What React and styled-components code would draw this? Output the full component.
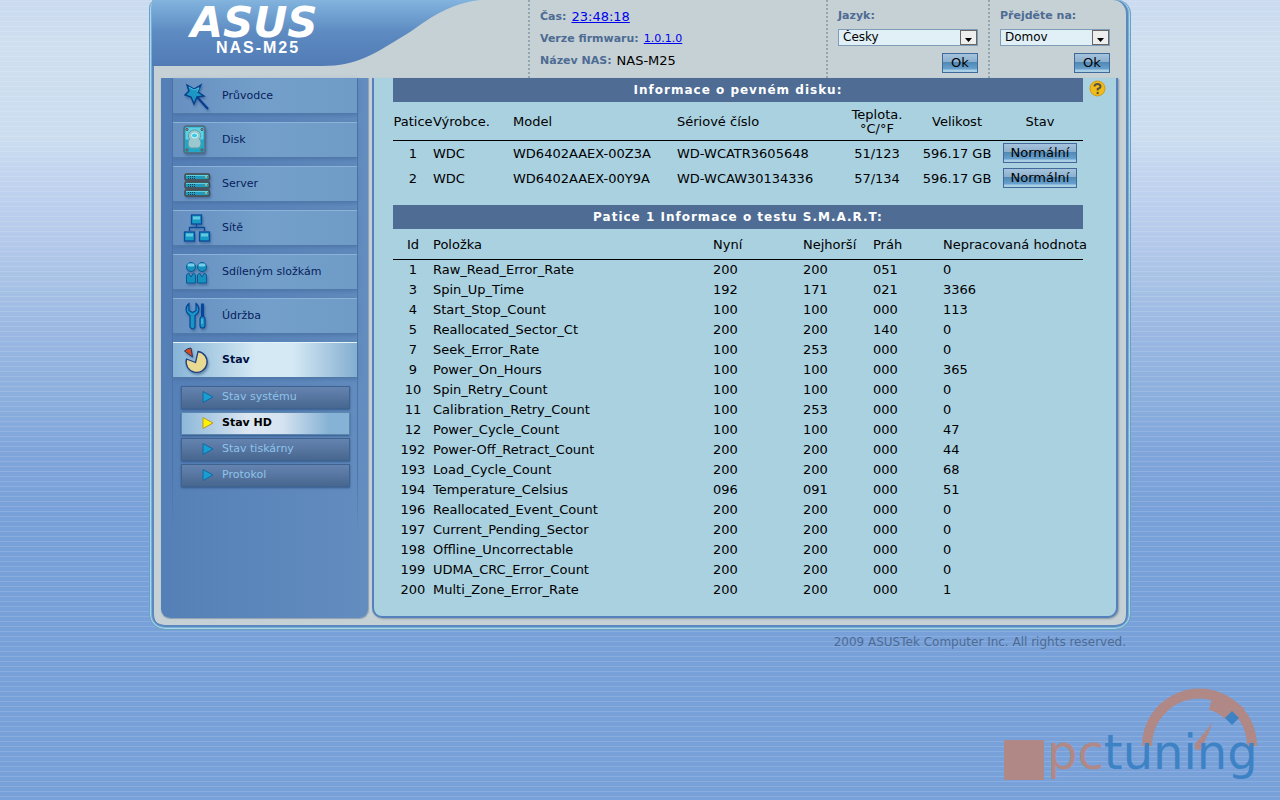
import React from 'react';
import styled, { createGlobalStyle, css } from 'styled-components';

const Global = createGlobalStyle`
  * { box-sizing: border-box; }
  html { background: #7ba3db; }
  body {
    margin: 0;
    min-height: 100vh;
    font: 13px/20px "DejaVu Sans", Verdana, sans-serif;
    color: #000;
    background:
      repeating-linear-gradient(to bottom, transparent 0 1px, rgba(255,255,255,.13) 1px 2px, transparent 2px 5px),
      linear-gradient(to bottom, #cadaf0 0, #cfdff0 40px, #cbddef 140px, #c3d5ef 170px, #b7cbec 230px, #a8c3e6 280px, #9bb8e3 330px, #8bafdd 400px, #80a5db 450px, #78a1d9 520px, #78a1d9 100%);
  }
`;

const Page = styled.div`
  position: relative;
  min-height: 100vh;
`;

const Frame = styled.div`
  max-width: 982px;
  margin: 0 auto;
  padding: 0 10px 11px;
  border: 1px solid #6f9fc0;
  border-top: 0;
  border-radius: 8px 14px 16px 16px;
  background: #c5d1d5;
  box-shadow: inset 1px 0 #a9d8e8, inset -1px 0 #a9d8e8, inset 0 -1px #a9d8e8,
    inset 2px 0 #78aeda, inset -2px 0 #78aeda, inset 0 -2px #78aeda,
    inset 4px 0 #5c88c0, inset -4px 0 #5c88c0, inset 0 -4px #5c88c0;
`;

const Header = styled.header`
  display: flex;
  height: 78px;
  margin: 0 -8px;
  padding-right: 8px;
`;

const Brand = styled.div`
  position: relative;
  flex: 1;
  min-width: 0;
`;

const BrandShape = styled.svg`
  display: block;
  position: absolute;
  top: 0;
  left: 0;
`;

const BrandText = styled.div`
  position: relative;
  width: 212px;
  text-align: center;
  color: #fff;
`;

const Logo = styled.div`
  padding-right: 8px;
  font: italic bold 42px/46px "DejaVu Sans", sans-serif;
`;

const ModelName = styled.div`
  margin-top: -7px;
  font: bold 16px/18px "Liberation Sans", Arial, sans-serif;
  letter-spacing: 2px;
`;

const Info = styled.dl`
  width: 298px;
  margin: 0;
  padding: 6px 10px;
  border-left: 2px dotted #93a5ae;
`;

const InfoRow = styled.div`
  display: flex;
  gap: 5px;
  height: 22px;
  line-height: 22px;
  font-size: ${p => (p.$small ? '11px' : '13px')};
`;

const InfoLabel = styled.dt`
  font-size: 11px;
  font-weight: bold;
  color: #4e6b93;
`;

const InfoValue = styled.dd`
  margin: 0;
  a { color: #0000ee; }
`;

const Picker = styled.form`
  display: flex;
  flex-direction: column;
  width: ${p => p.$width};
  padding: 6px 10px 0;
  border-left: 2px dotted #93a5ae;
`;

const PickerLabel = styled.label`
  font-size: 11px;
  font-weight: bold;
  line-height: 20px;
  color: #4e6b93;
`;

const SelectWrap = styled.div`
  position: relative;
  margin: 3px 0 7px;
  height: 17px;
`;

const Select = styled.select`
  display: block;
  appearance: none;
  width: 100%;
  height: 17px;
  padding: 0 20px 0 4px;
  border: 1px solid #7f9db9;
  border-radius: 0;
  background: #e0f0f6;
  color: #000;
  font: 12px/15px "DejaVu Sans", Verdana, sans-serif;
`;

const SelectArrow = styled.svg`
  position: absolute;
  top: 1px;
  right: 1px;
  pointer-events: none;
`;

const Button = styled.button`
  display: block;
  height: 20px;
  padding: 0;
  border: 1px solid #41699a;
  background: linear-gradient(#a5c3dc 0, #8cafce 45%, #5089b4 46%, #68a0cd 82%, #a8cfe4 90%);
  color: #000;
  font: 13px/18px "DejaVu Sans", Verdana, sans-serif;
  width: ${p => p.$width};
  ${p => p.$end && css`align-self: flex-end;`}
`;

const Body = styled.div`
  display: flex;
  gap: 3px;
`;

const Sidebar = styled.nav`
  flex: 0 0 208px;
  margin-left: 1px;
  padding: 0 10px 0 11px;
  border-right: 1px solid #8fa6b8;
  border-radius: 0 0 9px 9px;
  background: linear-gradient(to right, #5580b7, #638dbf);
  box-shadow: 0 1px 1px #8fa0b0;
`;

const Menu = styled.ul`
  list-style: none;
  margin: 0;
  padding: 0;
  border: 1px solid;
  border-width: 0 1px;
  border-image: linear-gradient(#4c74a7 85%, transparent) 1;
  height: 458px;
`;

const MenuItem = styled.li`
  height: 44px;
  &:first-child a { border-top-color: #6f99c8; }
`;

const MenuLink = styled.a`
  display: flex;
  align-items: center;
  gap: 11px;
  height: 36px;
  padding: 0 0 0 8px;
  border-top: 1px solid #8cb2da;
  border-bottom: 1px solid #4f79a8;
  background: linear-gradient(to right, #6790c1, #739fca 50%, #6f9bc7);
  box-shadow: 0 2px 4px #44699c88;
  color: #071e5c;
  font-size: 11px;
  text-decoration: none;
  svg { flex: none; filter: drop-shadow(1px 2px 1px #28508080); }
  ${p => p.$active && css`
    color: #001040;
    font-weight: bold;
    border-top-color: #e6f4fa;
    background: linear-gradient(to right, #86b4d6, #d5e9f4 45%, #d5e9f4 65%, #83aed0);
  `}
`;

const SubMenu = styled.ul`
  display: grid;
  gap: 3px;
  list-style: none;
  margin: 0;
  padding: 8px 7px 0 8px;
`;

const SubLink = styled.a`
  display: flex;
  align-items: center;
  gap: 8px;
  height: 23px;
  padding: 0 0 2px 20px;
  border: 1px solid #3f638f;
  background: linear-gradient(#6583b0, #48678f);
  box-shadow: 0 1px 2px #36598a;
  color: #8ec3ea;
  font-size: 11px;
  text-decoration: none;
  ${p => p.$active && css`
    color: #000;
    font-weight: bold;
    border-color: #5b86ae;
    background: linear-gradient(to right, #8db8da, #dde7f2 40%, #d5e3f0 60%, #86b2d5 88%);
  `}
`;

const Content = styled.main`
  position: relative;
  flex: 1;
  min-width: 0;
  margin-right: 2px;
  padding: 0 33px 17px 19px;
  border: 2px solid #5580bb;
  border-top: 0;
  border-radius: 0 0 10px 10px;
  background: #aad1e0;
  box-shadow: 1px 1px 2px #8899a5;
`;

const Help = styled.a`
  position: absolute;
  top: 2px;
  right: 10px;
  line-height: 0;
`;

const SectionTitle = styled.h2`
  margin: 0;
  height: 24px;
  background: #4e6c94;
  color: #fff;
  font-size: 12px;
  line-height: 24px;
  letter-spacing: 1px;
  text-align: center;
`;

const Table = styled.table`
  width: 100%;
  table-layout: fixed;
  border-collapse: collapse;
  margin-bottom: ${p => p.$gap || '0'};
  th { font-weight: normal; height: ${p => p.$head}; border-bottom: 1px solid #000; }
  td { height: ${p => p.$row}; }
`;

const Cell = styled.td`
  padding: ${p => (p.$flush ? '0' : '2px 0 0')};
  white-space: nowrap;
  line-height: 14px;
  text-align: ${p => p.$align || 'left'};
  button { margin: 0 auto; }
`;

const Footer = styled.footer`
  max-width: 980px;
  margin: 0 auto;
  padding: 2px 4px 0;
  color: #4e6b93;
  font-size: 12px;
  text-align: right;
`;

const Watermark = styled.svg`
  position: absolute;
  right: 16px;
  bottom: 12px;
`;

const icons = {
  wand: (
    <svg width="30" height="30" viewBox="0 0 30 30">
      <path d="M16 16l11 12" stroke="#083c92" strokeWidth="2.2" />
      <path d="M6 4l7 4 7-4-3 7 6 4-7 1-3 7-3-7-6-2 4-4z" fill="#1c96c3" stroke="#093f8b" strokeWidth="1.4" />
      <path d="M8 6l5 3 5-2-2 4" fill="none" stroke="#3fc0e0" />
    </svg>
  ),
  disk: (
    <svg width="30" height="30" viewBox="0 0 30 30">
      <rect x="3" y="1" width="21" height="27" rx="2.500" fill="#24a6c6" stroke="#566778" strokeWidth="1.3" />
      <rect x="4.500" y="2.500" width="18" height="12" rx="1" fill="#5fd3e6" />
      <path d="M13.500 5c5 0 8 5 5 9 3 4 1 9-2 9h-6c-4 0-4-6-2-9-3-4 0-9 5-9z" fill="#9bc7ce" stroke="#5b9eab" />
      <ellipse cx="13.500" cy="10.500" rx="3" ry="2.500" fill="#39cbe6" stroke="#e1f8fa" />
      {[[6, 4.5], [21, 4.5], [6, 25], [21, 25]].map(([x, y]) => (
        <circle key={`${x}-${y}`} cx={x} cy={y} r="1.100" fill="#a8a098" stroke="#554d4c" />
      ))}
    </svg>
  ),
  server: (
    <svg width="30" height="30" viewBox="0 0 30 30">
      {[5, 13, 21].map(y => (
        <g key={y}>
          <rect x="4" y={y} width="24.500" height="6" rx="1.500" fill="#209bbd" stroke="#4c4745" strokeWidth="1.500" />
          <path d={`M5 ${y + 1.5}h22`} stroke="#62cfe1" />
          <path d={`M7 ${y + 2.5}h8M7 ${y + 4.5}h8`} stroke="#133f50" strokeDasharray="1 1" />
          <circle cx="25" cy={y + 3} r="1" fill="#d2b766" />
        </g>
      ))}
    </svg>
  ),
  network: (
    <svg width="30" height="30" viewBox="0 0 30 30" stroke="#0a4a9c" strokeWidth="1.300" fill="#189bc4">
      <path d="M15.500 10v5M8.500 18v-3.500h15V18" fill="none" />
      <rect x="10.500" y="2" width="10" height="9" />
      <rect x="3.500" y="19" width="10" height="9" />
      <rect x="18.500" y="19" width="10" height="9" />
      <path d="M12 5h7M5 22h7M20 22h7" stroke="#63c7e0" strokeWidth="3" />
    </svg>
  ),
  users: (
    <svg width="30" height="30" viewBox="0 0 30 30" fill="#1591bd" stroke="#0b5997">
      {[10, 21].map(x => (
        <g key={x}>
          <circle cx={x} cy="10" r="4.500" />
          <path d={`M${x - 2} 8h4`} stroke="#74d0e9" strokeWidth="3" strokeLinecap="round" />
          <path d={`M${x - 4.5} 26v-8l2-2 2.500 4 2.500-4 2 2v8z`} />
        </g>
      ))}
    </svg>
  ),
  tools: (
    <svg width="30" height="30" viewBox="0 0 30 30" fill="#1797c2" stroke="#07469a" strokeWidth="1.200">
      <path d="M8 2.500c-4 3-4 9 1 12V26q3 4 5 0V14.500c5-3 5-9 1-12v7l-3.500 2L8 9.500z" />
      <path d="M20.500 3h2v13h-2z" fill="#07469a" />
      <rect x="19" y="15.500" width="5" height="11.500" rx="2.500" />
      <path d="M21 18v5" stroke="#63c7e0" />
    </svg>
  ),
  status: (
    <svg width="30" height="30" viewBox="0 0 30 30">
      <path d="M14.500 17.500L5.500 14A10.500 10.500 0 1 0 17 6.500z" fill="#e9da91" stroke="#213f82" strokeWidth="1.300" />
      <path d="M11.500 12L3.500 6q3-3 6.500-3z" fill="#d84a19" stroke="#24346c" />
    </svg>
  ),
};

const menu = [
  ['wand', 'Průvodce'],
  ['disk', 'Disk'],
  ['server', 'Server'],
  ['network', 'Sítě'],
  ['users', 'Sdíleným složkám'],
  ['tools', 'Údržba'],
  ['status', 'Stav'],
];

const subMenu = ['Stav systému', 'Stav HD', 'Stav tiskárny', 'Protokol'];

const disks = [
  ['1', 'WDC', 'WD6402AAEX-00Z3A', 'WD-WCATR3605648', '51/123', '596.17 GB'],
  ['2', 'WDC', 'WD6402AAEX-00Y9A', 'WD-WCAW30134336', '57/134', '596.17 GB'],
];

const smart = [
  ['1', 'Raw_Read_Error_Rate', '200', '200', '051', '0'],
  ['3', 'Spin_Up_Time', '192', '171', '021', '3366'],
  ['4', 'Start_Stop_Count', '100', '100', '000', '113'],
  ['5', 'Reallocated_Sector_Ct', '200', '200', '140', '0'],
  ['7', 'Seek_Error_Rate', '100', '253', '000', '0'],
  ['9', 'Power_On_Hours', '100', '100', '000', '365'],
  ['10', 'Spin_Retry_Count', '100', '100', '000', '0'],
  ['11', 'Calibration_Retry_Count', '100', '253', '000', '0'],
  ['12', 'Power_Cycle_Count', '100', '100', '000', '47'],
  ['192', 'Power-Off_Retract_Count', '200', '200', '000', '44'],
  ['193', 'Load_Cycle_Count', '200', '200', '000', '68'],
  ['194', 'Temperature_Celsius', '096', '091', '000', '51'],
  ['196', 'Reallocated_Event_Count', '200', '200', '000', '0'],
  ['197', 'Current_Pending_Sector', '200', '200', '000', '0'],
  ['198', 'Offline_Uncorrectable', '200', '200', '000', '0'],
  ['199', 'UDMA_CRC_Error_Count', '200', '200', '000', '0'],
  ['200', 'Multi_Zone_Error_Rate', '200', '200', '000', '1'],
];

const diskAlign = ['center', 'left', 'left', 'left', 'center', 'center', 'center'];
const smartAlign = ['center', 'left', 'left', 'left', 'left', 'left'];

const diskCols = [40, 80, 164, 160, 80, 80];
const smartCols = [40, 280, 90, 70, 70];

function Arrow({ active }) {
  return (
    <svg width="12" height="14" viewBox="0 0 12 14">
      <path d="M1 1.500L11 7 1 12.500z" fill={active ? '#fff200' : '#169fd0'} stroke={active ? '#b79a28' : '#1767a5'} />
    </svg>
  );
}

function Columns({ widths }) {
  return (
    <colgroup>
      {widths.map((w, i) => <col key={i} width={w} />)}
      <col />
    </colgroup>
  );
}

function PickerForm({ id, label, value, width }) {
  return (
    <Picker $width={width} onSubmit={e => e.preventDefault()}>
      <PickerLabel htmlFor={id}>{label}</PickerLabel>
      <SelectWrap>
        <Select id={id} defaultValue={value}>
          <option>{value}</option>
        </Select>
        <SelectArrow width="17" height="15" viewBox="0 0 17 15">
          <rect x="0.500" y="0.500" width="16" height="14" fill="#eee" stroke="#666" />
          <path d="M5 8h7l-3.500 4z" fill="#000" />
        </SelectArrow>
      </SelectWrap>
      <Button $width="36px" $end>Ok</Button>
    </Picker>
  );
}

export default function App() {
  return (
    <Page>
      <Global />
      <Frame>
        <Header>
          <Brand>
            <BrandShape width="330" height="66" viewBox="0 0 330 66" aria-hidden="true">
              <defs>
                <linearGradient id="brand" x2="0" y2="1">
                  <stop offset="0" stopColor="#82b4de" />
                  <stop offset=".5" stopColor="#5c8ac1" />
                  <stop offset="1" stopColor="#527bb5" />
                </linearGradient>
              </defs>
              <path d="M0 0H328C298 4 282 15 258 32C222 54 206 66 170 66H0z" fill="url(#brand)" />
            </BrandShape>
            <BrandText>
              <Logo>ASUS</Logo>
              <ModelName>NAS-M25</ModelName>
            </BrandText>
          </Brand>
          <Info>
            <InfoRow><InfoLabel>Čas:</InfoLabel><InfoValue><a href="#time">23:48:18</a></InfoValue></InfoRow>
            <InfoRow $small><InfoLabel>Verze firmwaru:</InfoLabel><InfoValue><a href="#firmware">1.0.1.0</a></InfoValue></InfoRow>
            <InfoRow><InfoLabel>Název NAS:</InfoLabel><InfoValue>NAS-M25</InfoValue></InfoRow>
          </Info>
          <PickerForm id="language" label="Jazyk:" value="Česky" width="162px" />
          <PickerForm id="goto" label="Přejděte na:" value="Domov" width="132px" />
        </Header>
        <Body>
          <Sidebar>
            <Menu>
              {menu.map(([icon, label]) => (
                <MenuItem key={icon}>
                  <MenuLink href={`#${icon}`} $active={icon === 'status'}>{icons[icon]}{label}</MenuLink>
                  {icon === 'status' && (
                    <SubMenu>
                      {subMenu.map(name => (
                        <li key={name}>
                          <SubLink href="#sub" $active={name === 'Stav HD'}>
                            <Arrow active={name === 'Stav HD'} />{name}
                          </SubLink>
                        </li>
                      ))}
                    </SubMenu>
                  )}
                </MenuItem>
              ))}
            </Menu>
          </Sidebar>
          <Content>
            <Help href="#help" aria-label="Help">
              <svg width="17" height="17" viewBox="0 0 17 17">
                <circle cx="8.500" cy="8.500" r="7.500" fill="#f0bd18" stroke="#d29a12" />
                <path d="M5.500 6.500Q5.500 4 8.500 4T11.500 6.500Q11.500 8 8.700 9v1.500" fill="none" stroke="#5a5445" strokeWidth="2" />
                <circle cx="8.700" cy="13" r="1.200" fill="#5a5445" />
              </svg>
            </Help>
            <SectionTitle>Informace o pevném disku:</SectionTitle>
            <Table $head="38px" $row="25px" $gap="15px">
              <Columns widths={diskCols} />
              <thead>
                <tr>
                  {['Patice', 'Výrobce.', 'Model', 'Sériové číslo', <>Teplota.<br />°C/°F</>, 'Velikost', 'Stav'].map((h, i) => (
                    <Cell as="th" scope="col" key={i} $align={diskAlign[i]}>{h}</Cell>
                  ))}
                </tr>
              </thead>
              <tbody>
                {disks.map(row => (
                  <tr key={row[0]}>
                    {row.map((v, i) => <Cell key={i} $align={diskAlign[i]}>{v}</Cell>)}
                    <Cell $flush><Button $width="74px">Normální</Button></Cell>
                  </tr>
                ))}
              </tbody>
            </Table>
            <SectionTitle>Patice 1 Informace o testu S.M.A.R.T:</SectionTitle>
            <Table $head="30px" $row="20px">
              <Columns widths={smartCols} />
              <thead>
                <tr>
                  {['Id', 'Položka', 'Nyní', 'Nejhorší', 'Práh', 'Nepracovaná hodnota'].map((h, i) => (
                    <Cell as="th" scope="col" key={h} $align={smartAlign[i]}>{h}</Cell>
                  ))}
                </tr>
              </thead>
              <tbody>
                {smart.map(row => (
                  <tr key={row[0]}>
                    {row.map((v, i) => <Cell key={i} $align={smartAlign[i]}>{v}</Cell>)}
                  </tr>
                ))}
              </tbody>
            </Table>
          </Content>
        </Body>
      </Frame>
      <Footer>2009 ASUSTek Computer Inc. All rights reserved.</Footer>
      <Watermark width="260" height="104" viewBox="0 0 260 104">
        <g fill="#b08886">
          <rect y="56" width="40" height="40" />
          <path d="M138 62A57.500 57.500 0 0 1 253 62H243A47.500 47.500 0 0 0 148 62z" />
          <path d="M209 10L205 26Q214 28 221 35L241 24z" />
          <path d="M191 60L209 38 198 64z" />
          <circle cx="194.500" cy="62" r="4" />
        </g>
        <path d="M228 27l7 7-7 7-7-7z" fill="#3e82c6" />
        <text x="43" y="85" fontSize="48" fontFamily="DejaVu Sans, sans-serif" fill="#b08886">pc<tspan fill="#3e82c6">tuning</tspan></text>
      </Watermark>
    </Page>
  );
}
